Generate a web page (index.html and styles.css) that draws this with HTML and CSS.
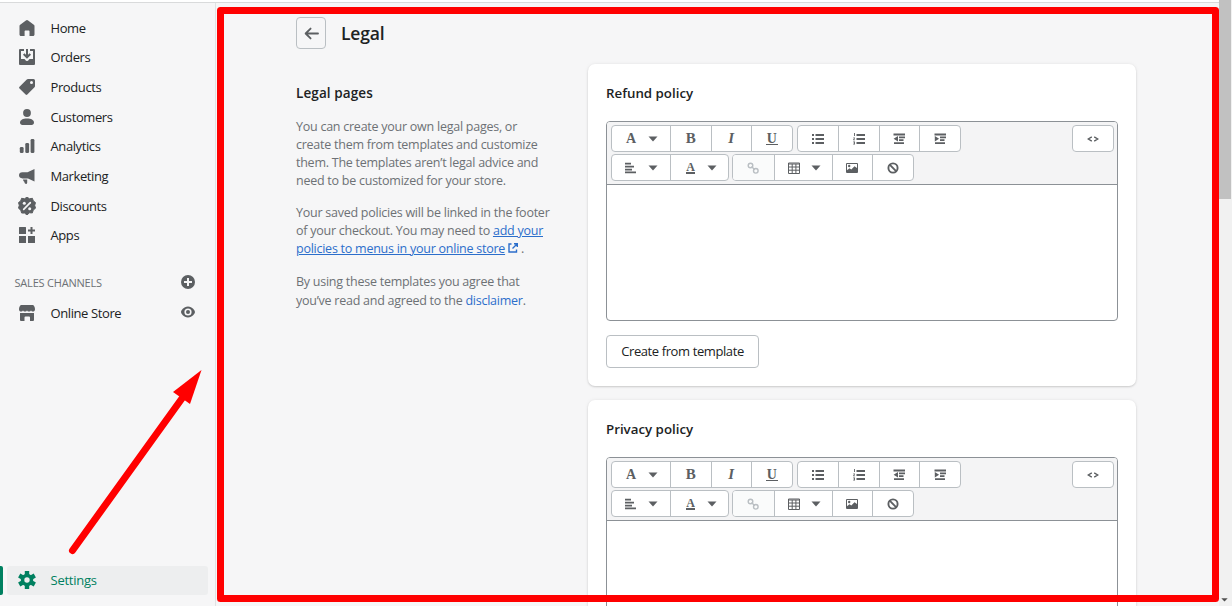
FILE: index.html
```html
<!DOCTYPE html>
<html lang="en">
<head>
<meta charset="utf-8">
<title>Legal</title>
<link rel="stylesheet" href="styles.css">
</head>
<body>
<svg class="defs" width="0" height="0">
  <symbol id="caret" viewBox="0 0 10 6"><path d="M.5.5h9L5 5.500z"/></symbol>
  <symbol id="bullets" viewBox="0 0 12 12"><path d="M0 1h2v2H0zM0 5h2v2H0zM0 9h2v2H0zM3.500 1H12v1.900H3.500zM3.500 5H12v1.900H3.500zM3.500 9H12v1.900H3.500z"/></symbol>
  <symbol id="numbers" viewBox="0 0 12 12"><path d="M1 0h.9v3H1zM.3 4.500h1.600v.8L1 6.500h1v.7H.2v-.7l.9-1.200H.3zM.2 8.500H2v3H.2v-.7h1v-.5H.6v-.6h.6v-.5h-1zM3.500 1H12v1.900H3.500zM3.500 5H12v1.900H3.500zM3.500 9H12v1.900H3.500z"/></symbol>
  <symbol id="outdent" viewBox="0 0 12 12"><path d="M.5.6H12v1.800H.5zM6 3.500h6v1.700H6zM6 6.300h4.500V8H6zM1 9.200h10v1.700H1zM5 3v5.400L.6 5.700z"/></symbol>
  <symbol id="indent" viewBox="0 0 12 12"><path d="M.5.6H12v1.800H.5zM6 3.500h6v1.700H6zM6 6.300h4.500V8H6zM1 9.200h10v1.700H1zM.8 3v5.400l4.300-2.700z"/></symbol>
  <symbol id="align" viewBox="0 0 12 12"><path d="M0 .8h6v1.700H0zM0 3.800h9v1.700H0zM0 6.700h7v1.700H0zM0 9.600h11v1.700H0z"/></symbol>
  <symbol id="link" viewBox="0 0 12 12"><g fill="none" stroke="currentColor" stroke-width="1.400"><circle cx="3.500" cy="3.500" r="2.300"/><circle cx="8.800" cy="8.800" r="2.300"/><path d="M4.500 4.500l3.300 3.300"/></g></symbol>
  <symbol id="table" viewBox="0 0 12 12"><path d="M.5 1h11v10.500H.5zM.5 2h11M.5 5h11M.5 8.200h11M4.200 2v9M7.900 2v9" fill="none" stroke="currentColor"/></symbol>
  <symbol id="image" viewBox="0 0 12 12"><path d="M.5 1.500h11v9H.5z" fill="none" stroke="currentColor"/><path d="M1 10V8.300l2.500-2 1.800 1.200 3.200-3.300L11 6v4.500z"/><circle cx="3.200" cy="4" r="1.200"/></symbol>
  <symbol id="ban" viewBox="0 0 12 12"><g fill="none" stroke="currentColor" stroke-width="1.900"><circle cx="6" cy="6" r="4.600"/><path d="M2.700 2.700l6.600 6.600"/></g></symbol>
  <symbol id="code" viewBox="0 0 12 8"><path d="M4.800 1.800L1.200 4l3.600 2.200M7.200 1.800L10.800 4 7.200 6.200" fill="none" stroke="currentColor" stroke-width="1.400"/></symbol>
</svg>
<div class="topbar"></div>
<div class="app">
  <nav class="sidebar">
    <ul class="nav">
      <li><svg class="ico" viewBox="0 0 16 16"><path d="M6.900.5a1.700 1.700 0 0 1 2.200 0l5.700 4.200c.5.400.7.800.7 1.400v8.400c0 .8-.6 1.500-1.500 1.500h-3.500v-4.500c0-.6-.4-1-1-1H6.600c-.6 0-1 .4-1 1V16H2C1.100 16 .5 15.300.5 14.500V6.100c0-.6.2-1 .7-1.400z"/></svg>Home</li>
      <li><svg class="ico" viewBox="0 0 16 16"><path d="M1 0h4v2H2v8h3.200c.5 0 .7.300 1 .8.400.8 1 1.200 1.800 1.200s1.400-.4 1.800-1.200c.3-.5.500-.8 1-.8H14V2h-3V0h4a1 1 0 0 1 1 1v14a1 1 0 0 1-1 1H1a1 1 0 0 1-1-1V1a1 1 0 0 1 1-1z"/><path d="M8 0v8M4.700 5L8 8.300 11.300 5" fill="none" stroke="currentColor" stroke-width="2"/></svg>Orders</li>
      <li><svg class="ico" viewBox="0 0 16 16"><path fill-rule="evenodd" d="M9 0h5.500A1.500 1.500 0 0 1 16 1.500V7c0 .5-.2.900-.5 1.200l-7.200 7.300a1.200 1.200 0 0 1-1.700 0L.5 9.400a1.200 1.200 0 0 1 0-1.700L7.800.500C8.100.2 8.500 0 9 0zm3.500 5a1.500 1.500 0 1 0 0-3 1.500 1.500 0 0 0 0 3z"/></svg>Products</li>
      <li><svg class="ico" viewBox="0 0 16 16"><circle cx="8" cy="4" r="3.900"/><path d="M1 13.600C1 11 4 9.500 8 9.500s7 1.500 7 4.100c0 1.400-1 2.400-2.400 2.400H3.400C2 16 1 15 1 13.600z"/></svg>Customers</li>
      <li><svg class="ico" viewBox="0 0 16 16"><rect x=".8" y="9" width="3.800" height="6" rx="1.300"/><rect x="6.300" y="5" width="3.800" height="10" rx="1.300"/><rect x="11.600" y="1" width="3.800" height="14" rx="1.300"/></svg>Analytics</li>
      <li><svg class="ico" viewBox="0 0 16 16"><path d="M15.500 1v12.500L9 10.400H3.500C1.300 10.400 0 9.100 0 7.300s1.300-3 3.300-3H8.500zM4 11.500h4.200v3c0 .8-.5 1.500-1.200 1.500s-1.200-.5-1.400-1.200L5 13.300h-.5z"/></svg>Marketing</li>
      <li><svg class="ico big" viewBox="0 0 18 18"><path d="M9 0l2.400 1.800 3-.5.900 2.600 2.200 1.700-.8 2.700.8 2.900-2.300 1.900-.8 2.800-3-.1L9 18l-2.400-1.900-3-.1-.8-2.800L.5 11.200l.8-2.900-.8-2.700 2.200-1.700.9-2.600 3 .5z" stroke="currentColor" stroke-linejoin="round"/><circle cx="6.300" cy="6.300" r="1.500" fill="#f6f6f7"/><circle cx="11.700" cy="11.700" r="1.500" fill="#f6f6f7"/><path d="M12.300 5.700l-6.600 6.600" stroke="#f6f6f7" stroke-width="1.700" stroke-linecap="round"/></svg>Discounts</li>
      <li><svg class="ico" viewBox="0 0 16 16"><path d="M.5 0h6a.5.5 0 0 1 .5.500V7H0V.500zM0 9h7v7H.500a.5.5 0 0 1-.5-.5zM9 9h7v6.500a.5.500 0 0 1-.5.500H9zM11.500 0h2v2.500H16v2h-2.500V7h-2V4.500H9v-2h2.500z"/></svg>Apps</li>
    </ul>
    <div class="channels"><span>SALES CHANNELS</span>
      <svg class="side" viewBox="0 0 14 14"><circle cx="7" cy="7" r="7"/><path d="M7 3v8M3 7h8" stroke="#f6f6f7" stroke-width="2"/></svg></div>
    <div class="store"><svg class="ico" viewBox="0 0 16 16"><path d="M2 0h12c.9 0 2 2.500 2 4.200 0 1.600-.9 2.400-2 2.400s-2-.7-2-1.700c0 1-.9 1.700-2 1.700s-2-.7-2-1.700c0 1-.9 1.700-2 1.700s-2-.7-2-1.700c0 1-.9 1.700-2 1.700S0 5.800 0 4.200C0 2.500 1.100 0 2 0zM1 8h14v7a1 1 0 0 1-1 1h-3v-3.500a1 1 0 0 0-1-1H6.500a1 1 0 0 0-1 1V16H2a1 1 0 0 1-1-1z"/></svg><span>Online Store</span>
      <svg class="side" viewBox="0 0 14 14"><path fill-rule="evenodd" d="M7 1.500c4.500 0 7 4.200 7 5.500s-2.500 5.500-7 5.500S0 8.300 0 7s2.500-5.500 7-5.500zM7 3.400a3.600 3.600 0 1 0 0 7.200 3.600 3.600 0 0 0 0-7.200z"/><circle cx="7" cy="7" r="2"/></svg></div>
    <div class="settings"><div class="pill"><svg class="ico big" viewBox="0 0 18 18"><g stroke="currentColor" stroke-width="4.400" stroke-linecap="butt"><path d="M9 0v18M1.200 4.500l15.600 9M1.200 13.500l15.600-9"/></g><circle cx="9" cy="9" r="6.200"/><circle cx="9" cy="9" r="2.700" fill="#edeeef"/></svg><span>Settings</span></div></div>
  </nav>
  <main class="page">
    <header class="title"><button class="back"><svg viewBox="0 0 16 14"><path d="M15 7H2M7 1.700L1.700 7 7 12.300" fill="none" stroke="currentColor" stroke-width="2" stroke-linecap="round" stroke-linejoin="round"/></svg></button><h1>Legal</h1></header>
    <div class="columns">
      <section class="about">
        <h2>Legal pages</h2>
        <p>You can create your own legal pages, or<br>create them from templates and customize<br>them. The templates aren’t legal advice and<br>need to be customized for your store.</p>
        <p>Your saved policies will be linked in the footer<br>of your checkout. You may need to <a href="#">add your</a><br><a href="#">policies to menus in your online store</a> <svg class="ext" viewBox="0 0 10 10"><path d="M3.500 1H1v8h7.500V6.500M6 .8h3.300V4M9 1L4.500 5.500" fill="none" stroke="currentColor" stroke-width="1.400"/></svg> .</p>
        <p class="terms">By using these templates you agree that<br>you’ve read and agreed to the <a class="plain" href="#">disclaimer</a>.</p>
      </section>
      <div class="cards">
        <section class="card">
          <h2>Refund policy</h2>
          <div class="editor">
            <div class="tools">
              <div class="row">
                <div class="group"><b class="wide"><i class="g">A</i><svg class="caret"><use href="#caret"/></svg></b><b><i class="g bold">B</i></b><b><i class="g ital">I</i></b><b><i class="g under">U</i></b></div>
                <div class="group"><b><svg><use href="#bullets"/></svg></b><b><svg><use href="#numbers"/></svg></b><b><svg><use href="#outdent"/></svg></b><b><svg><use href="#indent"/></svg></b></div>
                <div class="group end"><b><svg class="code"><use href="#code"/></svg></b></div>
              </div>
              <div class="row">
                <div class="group"><b class="wide"><svg><use href="#align"/></svg><svg class="caret"><use href="#caret"/></svg></b><b class="wide"><i class="g color">A</i><svg class="caret"><use href="#caret"/></svg></b></div>
                <div class="group"><b class="off"><svg><use href="#link"/></svg></b><b class="wide"><svg><use href="#table"/></svg><svg class="caret"><use href="#caret"/></svg></b><b><svg><use href="#image"/></svg></b><b><svg><use href="#ban"/></svg></b></div>
              </div>
            </div>
            <div class="area"></div>
          </div>
          <button class="create">Create from template</button>
        </section>
        <section class="card">
          <h2>Privacy policy</h2>
          <div class="editor">
            <div class="tools">
              <div class="row">
                <div class="group"><b class="wide"><i class="g">A</i><svg class="caret"><use href="#caret"/></svg></b><b><i class="g bold">B</i></b><b><i class="g ital">I</i></b><b><i class="g under">U</i></b></div>
                <div class="group"><b><svg><use href="#bullets"/></svg></b><b><svg><use href="#numbers"/></svg></b><b><svg><use href="#outdent"/></svg></b><b><svg><use href="#indent"/></svg></b></div>
                <div class="group end"><b><svg class="code"><use href="#code"/></svg></b></div>
              </div>
              <div class="row">
                <div class="group"><b class="wide"><svg><use href="#align"/></svg><svg class="caret"><use href="#caret"/></svg></b><b class="wide"><i class="g color">A</i><svg class="caret"><use href="#caret"/></svg></b></div>
                <div class="group"><b class="off"><svg><use href="#link"/></svg></b><b class="wide"><svg><use href="#table"/></svg><svg class="caret"><use href="#caret"/></svg></b><b><svg><use href="#image"/></svg></b><b><svg><use href="#ban"/></svg></b></div>
              </div>
            </div>
            <div class="area"></div>
          </div>
        </section>
      </div>
    </div>
  </main>
  <div class="scroll"><div class="thumb"></div><svg viewBox="0 0 8 5"><path d="M0 .3h8L4 4.500z"/></svg></div>
</div>
<svg class="marks" viewBox="0 0 1232 606"><rect x="220.500" y="10.500" width="995" height="588" fill="none" stroke="#f00" stroke-width="7" stroke-linejoin="round"/><path d="M72.500 550.500L183 397" stroke="#f00" stroke-width="7" stroke-linecap="round"/><path d="M201.500 370l-28.500 22 17 12z" fill="#f00"/></svg>
</body>
</html>
```

FILE: styles.css
```css
* { box-sizing: border-box; }
body {
  margin: 0; width: 1232px; height: 606px; overflow: hidden;
  display: flex; flex-direction: column; position: relative;
  font-family: "Open Sans", "Noto Sans", sans-serif;
  font-size: 13px; color: #202223; background: #f6f6f7;
}
h1, h2, p, ul { margin: 0; padding: 0; }
svg { display: block; fill: currentColor; flex: none; }
.defs { position: absolute; }
.topbar { height: 3px; flex: none; background: #fff; border-bottom: 1px solid #d9dadb; }
.app { flex: 1; display: flex; min-height: 0; }

/* sidebar */
.sidebar { width: 216px; flex: none; border-right: 1px solid #e1e2e3; display: flex; flex-direction: column; padding-top: 9.700px; letter-spacing: -.5px; }
.nav { list-style: none; letter-spacing: -.4px; }
.nav li, .store { height: 29.700px; display: flex; align-items: center; padding-left: 19px; gap: 15.500px; }
.ico { width: 16px; height: 16px; color: #5c5f62; }
.ico.big { width: 18px; height: 18px; margin: 0 -1px; }
.channels { height: 30px; margin-top: 17.300px; padding: 0 20px 0 14.500px; display: flex; align-items: center; justify-content: space-between; font-size: 11px; color: #6d7175; letter-spacing: -.2px; }
.side { width: 14px; height: 14px; color: #5c5f62; }
.store { padding-right: 20px; letter-spacing: -.4px; }
.store .ico { margin-top: 2px; }
.store span { padding-top: 2px; }
.store .side { margin-left: auto; }
.settings { margin: auto 0 11px; height: 29px; display: flex; gap: 4px; color: #008060; letter-spacing: -.25px; }
.settings::before { content: ""; width: 3px; background: #008060; border-radius: 0 2px 2px 0; }
.pill { width: 201px; background: #edeeef; border-radius: 3px; display: flex; align-items: center; gap: 15.500px; padding: 0 0 1px 12px; }
.pill .ico { color: #008060; }

/* page */
.page { flex: 1; padding-left: 80px; min-width: 0; overflow: hidden; }
.title { display: flex; align-items: center; gap: 15px; margin-top: 14px; height: 32px; }
.back { width: 30px; height: 32px; border: 1px solid #babfc3; border-radius: 4px; background: none; padding: 0; display: grid; place-items: center; color: #5c5f62; }
.back svg { width: 15px; height: 13px; }
h1 { font-size: 17.500px; font-weight: 600; line-height: 24px; letter-spacing: -.2px; padding-bottom: 1px; }
h2 { font-size: 13.500px; font-weight: 600; line-height: 20px; }
.columns { display: flex; margin-top: 15px; }
.about { width: 292px; padding-top: 19px; color: #6d7175; white-space: nowrap; }
.about h2 { color: #202223; margin-bottom: 15px; letter-spacing: .1px; }
.about p { font-size: 12.500px; line-height: 18px; margin-bottom: 14px; letter-spacing: -.25px; }
.about .terms { line-height: 19px; }
a { color: #2c6ecb; }
.plain { text-decoration: none; }
.ext { display: inline-block; width: 10px; height: 10px; color: #2c6ecb; }
.cards { display: flex; flex-direction: column; gap: 14px; width: 548px; flex: none; }
.card { background: #fff; border-radius: 7px; height: 322px; padding: 19px 18px 18px; box-shadow: 0 0 4px rgba(23,24,24,.06), 0 1px 2px rgba(0,0,0,.15); }
.card h2 { font-size: 13.300px; margin-bottom: 18px; }
.editor { border: 1px solid #8c9196; border-radius: 4px; height: 200px; overflow: hidden; }
.tools { height: 63px; background: #f4f4f5; border-bottom: 1px solid #8c9196; padding: 3px 3px 0 4px; display: flex; flex-direction: column; gap: 2px; }
.row { display: flex; gap: 4px; }
.row + .row { gap: 3px; }
.group { display: flex; height: 27px; border: 1px solid #babfc3; border-radius: 4px; background: #fff; overflow: hidden; color: #5c5f62; }
.group b { width: 40.500px; display: flex; align-items: center; justify-content: center; }
.group b + b { border-left: 1px solid #babfc3; }
.group b.wide { width: 58px; gap: 11px; justify-content: flex-start; padding-left: 13px; }
.group b.off { background: #fafbfb; color: #babfc3; }
.group svg { width: 12px; height: 12px; }
.group .caret { width: 10px; height: 6px; }
.group .code { height: 8px; }
.end { margin-left: auto; }
.end b { width: 40px; }
.g { font: bold 14px/13px "Liberation Serif", serif; width: 12px; text-align: center; }
.g.bold { font-size: 15px; }
.g.ital { font-style: italic; font-size: 15px; }
.g.under { border-bottom: 1px solid; line-height: 11px; }
.g.color { font-size: 12px; line-height: 10px; border-bottom: 2px solid; width: 9px; margin: 0 1px 0 2px; }
.create { margin-top: 14px; height: 33px; width: 153px; border: 1px solid #babfc3; border-radius: 4px; background: #fff; font: 500 13px "Open Sans", sans-serif; letter-spacing: -.4px; color: #202223; padding: 0 0 2px; white-space: nowrap; display: block; }

/* scrollbar */
.scroll { width: 13px; flex: none; background: #f1f1f1; display: flex; flex-direction: column; justify-content: space-between; padding-bottom: 4px; margin-top: -3px; color: #505050; }
.thumb { height: 199px; background: #c1c1c1; margin-right: 1px; }
.scroll svg { width: 7px; height: 4px; margin-left: 2px; }

.marks { position: absolute; left: 0; top: 0; width: 1232px; height: 606px; pointer-events: none; }
```
